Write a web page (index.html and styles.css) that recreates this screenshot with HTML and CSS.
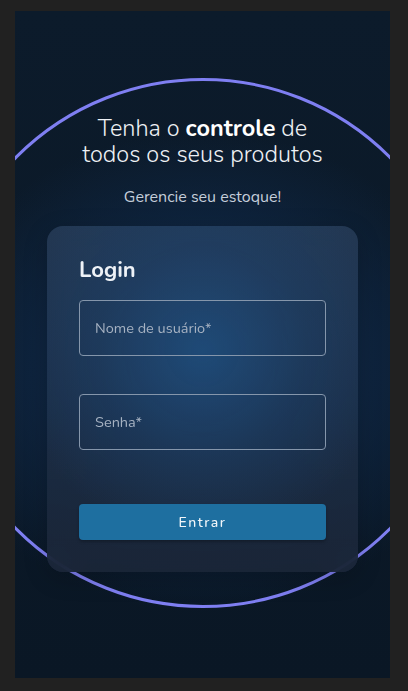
FILE: index.html
```html
<!DOCTYPE html>
<html lang="pt-BR">
<head>
<meta charset="utf-8">
<title>Login</title>
<link rel="stylesheet" href="styles.css">
</head>
<body>
<main class="screen">
  <div class="ring" aria-hidden="true"></div>
  <header class="hero">
    <h1 class="hero-title">Tenha o <strong>controle</strong> de<br>todos os seus produtos</h1>
    <p class="hero-sub">Gerencie seu estoque!</p>
  </header>
  <form class="card">
    <h2 class="card-title">Login</h2>
    <label class="field"><input class="field-input" type="text" placeholder="Nome de usuário*"></label>
    <label class="field"><input class="field-input" type="password" placeholder="Senha*"></label>
    <button class="btn" type="button">Entrar</button>
  </form>
</main>
</body>
</html>
```

FILE: styles.css
```css
* { box-sizing: border-box; }
html, body { margin: 0; }
body {
  background: #212121;
  padding: 11px 18px 13px 15px;
  font-family: "Nunito", "Lato", "Open Sans", sans-serif;
}
.screen {
  position: relative;
  overflow: hidden;
  width: 375px;
  height: 667px;
  background:
    radial-gradient(ellipse 280px 240px at 50% 54%, #123459 0%, #0f2745 45%, rgba(12, 26, 42, 0) 100%),
    linear-gradient(180deg, #0c1b2b, #0a1725);
  display: flex;
  flex-direction: column;
  align-items: center;
  padding-top: 104px;
}
.ring {
  position: absolute;
  left: calc(50% - 265px);
  top: 67px;
  width: 530px;
  height: 530px;
  border-radius: 50%;
  border: 3px solid #7f7ff2;
}
.hero { position: relative; text-align: center; }
.hero-title {
  margin: 0;
  font-size: 23.5px;
  line-height: 26px;
  font-weight: 300;
  color: #eef1f5;
}
.hero-title strong { font-weight: 700; color: #fff; }
.hero-sub {
  margin: 20px 0 0;
  font-size: 16px;
  line-height: 20px;
  font-weight: 400;
  color: #c5ceda;
}
.card {
  position: relative;
  margin-top: 19px;
  width: 311px;
  height: 346px;
  border-radius: 16px;
  padding: 30px 32px 0;
  background:
    radial-gradient(ellipse 190px 190px at 50% 36%, rgba(31, 78, 126, 0.85), rgba(30, 66, 108, 0.45) 55%, rgba(30, 50, 80, 0) 100%),
    linear-gradient(180deg, rgba(40, 62, 90, 0.82), rgba(30, 48, 72, 0.8) 55%, rgba(27, 38, 56, 0.92));
  backdrop-filter: blur(10px);
  box-shadow: 0 6px 24px rgba(0, 0, 0, 0.2);
  display: flex;
  flex-direction: column;
}
.card-title {
  margin: 0;
  font-size: 22px;
  line-height: 28px;
  font-weight: 700;
  color: #eef2f7;
}
.field { display: block; margin-top: 16px; }
.field + .field { margin-top: 38px; }
.field-input {
  display: block;
  width: 100%;
  height: 56px;
  padding: 0 15px;
  border: 1px solid #8596ab;
  border-radius: 4px;
  background: transparent;
  font: inherit;
  font-size: 14.5px;
  color: #fff;
  outline: none;
}
.field-input::placeholder { color: #a6b2c2; }
.btn {
  margin-top: 54px;
  height: 36px;
  border: 0;
  border-radius: 4px;
  background: #1e6fa0;
  color: #f2f6fa;
  font: inherit;
  font-size: 14px;
  font-weight: 500;
  letter-spacing: 1.5px;
  box-shadow: 0 2px 3px rgba(0, 0, 0, 0.25);
}
```
